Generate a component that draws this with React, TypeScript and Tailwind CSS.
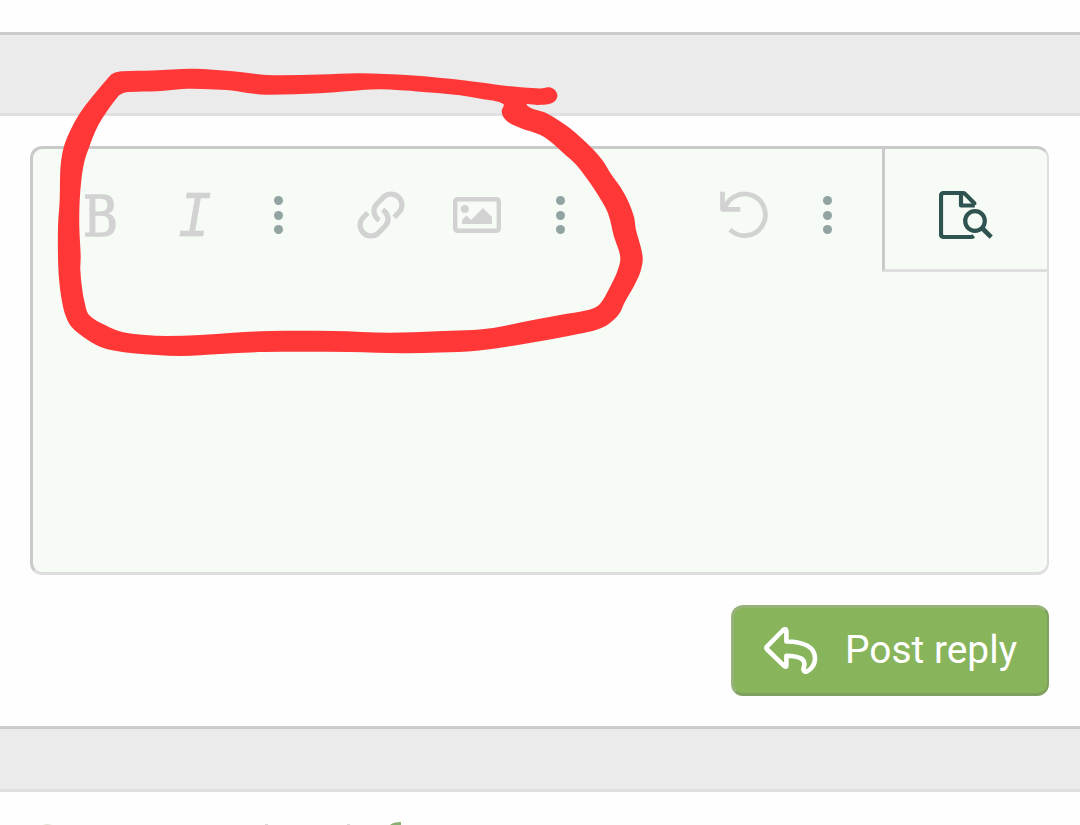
import type { ReactNode } from "react";

type Point = [number, number];

const markerOuter: Point[] = [
  [108, 78], [113, 73.5], [122, 71.3], [153, 70.5], [193, 68.7], [233, 71.3], [267, 75], [320, 74.5],
  [360, 73.3], [410, 75.3], [467, 80.7], [507, 85.9], [540, 88.5], [549, 87.3], [555, 90.2],
  [557.4, 95.5], [555, 101], [549, 104], [538, 104.9], [527, 105.3], [547, 113.5], [570, 128.3],
  [593, 149.3], [603, 161], [611, 174], [621, 188], [629, 203], [634, 217], [636, 230],
  [641, 248], [642.7, 260], [640, 273], [634, 286], [625, 301.7], [619, 314], [609, 323.8],
  [600, 328.5], [587, 332.3], [547, 340], [515, 345.5], [477, 350.7], [440, 352.5], [403, 353.3],
  [350, 352], [263, 352], [220, 354], [180, 356], [133, 353.3], [115, 350.8], [100, 346.7],
  [84, 337.5], [71.7, 327], [66.5, 318], [63, 306.7], [59.7, 286], [58.2, 265], [58, 226.7],
  [59.7, 200], [60.3, 170], [62, 155], [65, 143], [71, 129], [80, 113], [92, 97],
];

const markerInner: Point[] = [
  [118, 96.5], [123.3, 93], [130, 91.9], [156.7, 91.3], [186.7, 88.7], [226.7, 90], [248, 93], [266.7, 94.7], [320, 93.3],
  [350, 91], [380, 89.3], [420, 91.7], [460, 95.3], [482, 99], [503.3, 104], [501.7, 111], [503.7, 117.5],
  [509.5, 123], [521, 128.2], [540, 134.7], [551, 142], [563, 152.7], [575, 163.5], [585, 176], [598, 195], [608, 213.3],
  [614, 236.7], [619, 251], [620.3, 260], [616.7, 273], [609, 289], [601.7, 301.7], [596, 307],
  [588, 310], [560, 315], [533, 320], [493, 328], [466, 330.3], [436.7, 331.3], [390, 332.7],
  [333, 331], [270, 331], [233, 332.7], [200, 335], [166.7, 336], [145, 335], [123.3, 332.3],
  [105, 325], [89, 315], [85, 304], [82.3, 290], [80.3, 270], [80.7, 256.7], [79.3, 226.7],
  [79.7, 200], [81.7, 176.7], [84.5, 161], [89.3, 146.7], [95, 132], [102.5, 118],
];

// closed curve running through every point
function smooth(points: Point[]) {
  const n = points.length;
  const parts = [`M${points[0].join(" ")}`];
  for (let i = 0; i < n; i++) {
    const a = points[(i - 1 + n) % n];
    const b = points[i];
    const c = points[(i + 1) % n];
    const d = points[(i + 2) % n];
    // handles follow the segment's own length so that uneven spacing does not overshoot
    const length = Math.hypot(c[0] - b[0], c[1] - b[1]);
    const start = length / (3 * Math.hypot(c[0] - a[0], c[1] - a[1]));
    const end = length / (3 * Math.hypot(d[0] - b[0], d[1] - b[1]));
    parts.push(
      `C${b[0] + (c[0] - a[0]) * start} ${b[1] + (c[1] - a[1]) * start} ${c[0] - (d[0] - b[0]) * end} ${c[1] - (d[1] - b[1]) * end} ${c[0]} ${c[1]}`
    );
  }
  return parts.join("") + "Z";
}

function Marker() {
  return (
    <svg className="pointer-events-none absolute left-0 top-0" width="1080" height="400" viewBox="0 0 1080 400">
      <path d={smooth(markerOuter) + smooth(markerInner)} fill="#ff3737" fillRule="evenodd" />
    </svg>
  );
}

function ToolButton({ label, children }: { label: string; children: ReactNode }) {
  return (
    <button aria-label={label} className="flex h-[132px] w-24 items-center justify-center text-[#d2d2d2]">
      {children}
    </button>
  );
}

function MoreButton() {
  return (
    <button aria-label="More options" className="flex h-[132px] w-[72px] flex-col items-center justify-center gap-[5.4px] pr-px">
      <span className="size-[9px] rounded-full bg-[#92a4a2]" />
      <span className="size-[9px] rounded-full bg-[#92a4a2]" />
      <span className="size-[9px] rounded-full bg-[#92a4a2]" />
    </button>
  );
}

function LinkIcon() {
  return (
    <svg width="48" height="48" viewBox="0 0 48 48" fill="none" stroke="currentColor" strokeWidth="5.2">
      <path d="M37.2 26.2 42.2 21.1A10.9 10.9 0 0 0 27.2 5.4L19.8 13C15 18 16.5 25.5 22.3 29.4" />
      <path d="M10.8 21.8 5.8 26.9A10.9 10.9 0 0 0 20.8 42.6L28.2 35C33 30 31.5 22.5 25.7 18.6" />
    </svg>
  );
}

function ImageIcon() {
  return (
    <svg width="48" height="36" viewBox="0 0 48 36" fill="currentColor">
      <rect x="2.2" y="2.2" width="43.6" height="31.6" rx="2.4" fill="none" stroke="currentColor" strokeWidth="4.4" />
      <circle cx="11.8" cy="12.1" r="4" />
      <path d="M9 27v-4l4.5-4.5L18 23l12-12 9 9v7Z" />
    </svg>
  );
}

function UndoIcon() {
  return (
    <svg width="48" height="48" viewBox="0 0 48 48" fill="none" stroke="currentColor" strokeWidth="4.8">
      <path d="M4 20.5A20.8 20.8 0 1 1 10 38.6" />
      <path d="M2.5 .8V18.3H20.3" strokeLinejoin="round" />
    </svg>
  );
}

function PreviewIcon() {
  return (
    <svg width="54" height="48" viewBox="0 0 54 48" fill="none" stroke="currentColor" strokeWidth="4.2">
      <path d="M35.2 14V12.2L26.3 3.1Q25.2 2 23.5 2H5Q2 2 2 5V43Q2 46 5 46H31.5Q33.5 46 34.8 45" />
      <path d="M22 2V14.5H35.8" strokeLinejoin="round" />
      <circle cx="36" cy="30" r="9.8" />
      <path d="M43 37 52.2 46.2" strokeWidth="4.6" />
    </svg>
  );
}

function ReplyIcon() {
  return (
    <svg width="54" height="48" viewBox="0 0 54 48" fill="none" stroke="white" strokeWidth="4.6" strokeLinejoin="round">
      <path d="M22.4 4.2V14.5C40 14.7 51 20.2 51 31.5C51 38.8 46 43 43 44.3C40.5 45.4 38.8 43.5 39.8 40.5C42.5 32 36 29 22.4 28.7V38Q22.4 41 19.8 38.6L3.2 22.5Q1.7 20.9 3.2 19.3L19.2 3Q22.2 .8 22.4 4.2Z" />
    </svg>
  );
}

function Toolbar() {
  return (
    <div className="flex h-[132px] pl-5">
      <ToolButton label="Bold">
        <span className="mr-px mt-[3px] block scale-x-[.85] font-['DejaVu_Serif',serif] text-[56px] leading-none [-webkit-text-stroke:1.4px_#d2d2d2]">
          B
        </span>
      </ToolButton>
      <ToolButton label="Italic">
        <span className="mr-[5px] mt-[8px] block scale-x-90 font-['Liberation_Mono',monospace] text-[64px] italic leading-none [-webkit-text-stroke:0.6px_#d2d2d2]">
          I
        </span>
      </ToolButton>
      <div className="-ml-0.5 mr-[18px]">
        <MoreButton />
      </div>
      <ToolButton label="Insert link">
        <LinkIcon />
      </ToolButton>
      <ToolButton label="Insert image">
        <ImageIcon />
      </ToolButton>
      <MoreButton />
      <div className="ml-auto flex pr-[18px]">
        <ToolButton label="Undo">
          <UndoIcon />
        </ToolButton>
        <MoreButton />
      </div>
      <button
        aria-label="Preview"
        className="flex h-[123px] w-[165px] justify-center border-b-[3px] border-l-[3px] border-b-[#dedede] border-l-[#cacaca] pt-[42px] text-[#2f5350]"
      >
        <PreviewIcon />
      </button>
    </div>
  );
}

export default function App() {
  return (
    <div className="relative flex h-[825px] w-[1080px] flex-col overflow-hidden bg-[#fefefe] font-[Roboto,sans-serif]">
      <div className="mt-8 h-[84px] shrink-0 border-y-[3px] border-b-[#e0e0e0] border-t-[#cbcbcb] bg-[#ebebeb]" />
      <main className="flex h-[610px] shrink-0 flex-col items-end pl-[30px] pr-[31px] pt-[30px]">
        <div className="h-[429px] w-full overflow-hidden rounded-[12px] border-[3px] border-r-2 border-b-[#dedede] border-l-[#cacaca] border-r-[#dedede] border-t-[#cacaca] bg-[#f6fbf5]">
          <Toolbar />
        </div>
        <button className="mt-[30px] flex h-[91px] w-[318px] items-center rounded-[12px] border-[3px] border-r-2 border-b-[#7fa05e] border-l-[#97b37a] border-r-[#7fa05e] border-t-[#97b37a] bg-[#88b45c] pl-[30px]">
          <ReplyIcon />
          <span className="ml-[27px] whitespace-nowrap text-[38.9px] leading-none text-white">Post reply</span>
        </button>
      </main>
      <div className="h-[66px] shrink-0 border-y-[3px] border-b-[#e0e0e0] border-t-[#cbcbcb] bg-[#ebebeb]" />
      <svg className="mt-[29px] shrink-0" width="460" height="4" viewBox="0 0 460 4">
        <path d="M43 4Q47 2.4 52 4Z" fill="#dad9c8" />
        <path d="M265 3h3v1h-3zM347 3h3v1h-3z" fill="#d9d9d9" />
        <path d="M390 4Q393 1 401 1V4Z" fill="#88b073" />
      </svg>
      <Marker />
    </div>
  );
}
